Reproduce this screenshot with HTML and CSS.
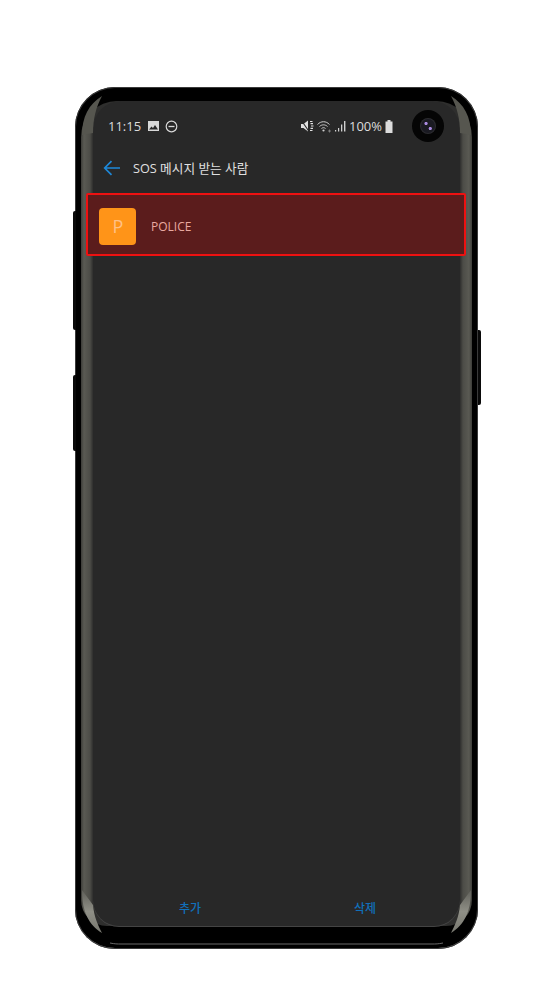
FILE: index.html
```html
<!DOCTYPE html>
<html lang="ko">
<head>
<meta charset="utf-8">
<title>SOS 메시지 받는 사람</title>
<link rel="stylesheet" href="styles.css">
</head>
<body>
<div class="phone">
  <span class="key key-a"></span>
  <span class="key key-b"></span>
  <span class="key key-c"></span>
  <div class="screen">
    <div class="panel">
      <div class="camera"><span class="lens"></span></div>
      <div class="status">
        <div class="status-left">
          <span class="time">11:15</span>
          <svg class="ico" width="13" height="12" viewBox="0 0 13 12"><path fill="#d8d8d8" fill-rule="evenodd" d="M1 1h11v10H1zM2 9.500h9L8 5 6 8 4.500 6.500z"/><circle cx="4" cy="3.700" r="1.100" fill="#d8d8d8"/></svg>
          <svg class="ico" width="13" height="13" viewBox="0 0 13 13"><circle cx="6.500" cy="6.500" r="5.300" fill="none" stroke="#d8d8d8" stroke-width="1.200"/><path d="M3.500 6.500h6" stroke="#d8d8d8" stroke-width="1.300"/></svg>
        </div>
        <div class="status-right">
          <svg width="13" height="12" viewBox="0 0 13 12"><path fill="#e0e0e0" d="M0 4h2.500L7 .5v11L2.500 8H0z"/><path d="M0.500 .5l7.500 11" stroke="#282828" stroke-width="1.100"/><path d="M9 1.500h2.500M9.500 3.700h2.500M10 6h2.500M9.500 8.300h2.500M9 10.500h2.500" stroke="#e0e0e0" stroke-width="1.200"/></svg>
          <svg width="15" height="13" viewBox="0 0 15 13"><g fill="none" stroke="#cfcfcf" stroke-width="1"><path d="M0.500 4.500C4 .8 9 .8 12.500 4.500"/><path d="M2.500 6.500C4.800 4.300 8.200 4.300 10.500 6.500"/><path d="M4.500 8.500C5.800 7.400 7.200 7.400 8.500 8.500"/></g><circle cx="6.500" cy="10.500" r="1.100" fill="#cfcfcf"/><path d="M11 11h3M12.500 9.500v3" stroke="#8a8a8a" stroke-width=".8"/></svg>
          <svg width="11" height="12" viewBox="0 0 11 12"><path fill="#d0d0d0" d="M0 10h1.200v1.500H0zM3 8h1.200v3.500H3zM6 4.500h1.300v7H6zM9 1h1.400v10.500H9z"/></svg>
          <span class="pct">100%</span>
          <svg width="8" height="13" viewBox="0 0 8 13"><path fill="#dcdcdc" d="M2.500 0h3v1.500H7.500V13H.5V1.500h2z"/></svg>
        </div>
      </div>
      <header class="appbar">
        <svg class="back" width="18" height="16" viewBox="0 0 18 16"><path d="M17 8H2M8.500 1.200 1.700 8l6.800 6.800" fill="none" stroke="#1e88d8" stroke-width="1.700"/></svg>
        <h1 class="title">SOS 메시지 받는 사람</h1>
      </header>
      <div class="row">
        <div class="avatar">P</div>
        <span class="name">POLICE</span>
      </div>
      <div class="fill"></div>
      <footer class="actions">
        <button class="action">추가</button>
        <button class="action">삭제</button>
      </footer>
    </div>
  </div>
  <svg class="gloss" width="403" height="862" viewBox="0 0 403 862">
    <defs>
      <linearGradient id="crescent" x1="0" y1="0" x2="0" y2="1">
        <stop offset="0" stop-color="#5f5f59"/>
        <stop offset=".5" stop-color="#8f8f86"/>
        <stop offset="1" stop-color="#77776f"/>
      </linearGradient>
    </defs>
    <path d="M7 48C7 30 14 17 27 9C21 20 18 32 18 46Z" fill="#56564f"/>
    <path d="M396 48C396 30 389 17 376 9C382 20 385 32 385 46Z" fill="#56564f"/>
    <path d="M7 803C7 825 14 838 27 846C23 838 19 830 18 818Z" fill="url(#crescent)"/>
    <path d="M396 803C396 825 389 838 376 846C380 838 384 830 385 818Z" fill="url(#crescent)"/>
    <path d="M35 856C40 857 42 857 46 857H357C361 857 363 857 368 856" fill="none" stroke="#6a6a6a"/>
  </svg>
</div>
</body>
</html>
```
FILE: styles.css
```css
* { box-sizing: border-box; }
html, body { margin: 0; height: 100%; background: #fff; overflow: hidden; }
body { padding: 87px 0 0 75px; font-family: "Open Sans", "Noto Sans CJK KR", sans-serif; }
.phone {
  position: relative;
  width: 403px;
  height: 862px;
  padding: 14px 6px 23px;
  background: #000;
  border-radius: 40px;
  box-shadow: inset 0 0 0 1px #3a3a3a, inset 0 -1px 0 #777;
}
.key { position: absolute; width: 3px; background: #0a0a0a; }
.key-a { left: -2px; top: 124px; height: 119px; border-radius: 2px 0 0 2px; }
.key-b { left: -2px; top: 288px; height: 76px; border-radius: 2px 0 0 2px; }
.key-c { right: -3px; top: 243px; height: 75px; border-radius: 0 2px 2px 0; }
.screen {
  height: 100%;
  padding: 0 12px;
  border-radius: 36px 36px 26px 26px;
  background: linear-gradient(90deg, #3c3c38 0, #5a5a53 3px, #4c4c47 9px, #2e2e2d 12px, #2e2e2d 379px, #4c4c47 382px, #5a5a53 388px, #3c3c38 391px);
}
.panel {
  position: relative;
  display: flex;
  flex-direction: column;
  height: 100%;
  border-radius: 28px 28px 26px 26px;
  background: #282828;
  box-shadow: 0 1px 0 #444;
}
.gloss { position: absolute; left: 0; top: 0; pointer-events: none; }
.camera {
  position: absolute;
  right: 16px;
  top: 9px;
  width: 32px;
  height: 32px;
  display: flex;
  align-items: center;
  justify-content: center;
  border-radius: 50%;
  background: #050505;
}
.lens {
  width: 14px;
  height: 14px;
  border-radius: 50%;
  background: radial-gradient(circle at 36% 32%, #a98ae0 0 1.200px, transparent 2px), radial-gradient(circle at 66% 68%, #a98ae0 0 1.200px, transparent 2px), #1a1a22;
  box-shadow: 0 0 0 1px #2c2c30;
}
.status {
  display: flex;
  justify-content: space-between;
  height: 50px;
  padding: 16px 67px 0 15px;
  color: #dcdcdc;
  font-size: 13px;
  line-height: 18px;
}
.status-left, .status-right { display: flex; align-items: center; height: 18px; }
.status-left { gap: 5px; }
.status-right { gap: 3px; }
.time { margin-right: 1px; font-size: 13px; }
.pct { font-size: 13px; margin: 0; }
.appbar { display: flex; align-items: center; height: 33px; padding-left: 10px; margin-bottom: 9px; }
.back { flex: none; margin-right: 12px; }
.title { margin: 0; color: #e0e0e0; font-size: 12.7px; font-weight: 400; }
.row {
  display: flex;
  align-items: center;
  flex: none;
  height: 63px;
  width: 380px;
  margin-left: -7px;
  padding: 3px 0 0 11px;
  border: 2px solid #ee1111;
  border-radius: 2px;
  background: #5b1c1c;
}
.avatar {
  display: flex;
  align-items: center;
  justify-content: center;
  width: 37px;
  height: 37px;
  padding-left: 1px;
  border-radius: 4px;
  background: #ff9418;
  color: #ffc187;
  font-size: 18px;
}
.name { margin-left: 15px; color: #e9a9a0; font-size: 12px; }
.fill { flex: 1; }
.actions { display: flex; height: 37px; padding: 0 7.500px 0 9.500px; }
.action {
  flex: 1;
  padding: 0;
  border: 0;
  background: none;
  color: #1170bb;
  font: 500 12px "Noto Sans CJK KR", sans-serif;
}
```
